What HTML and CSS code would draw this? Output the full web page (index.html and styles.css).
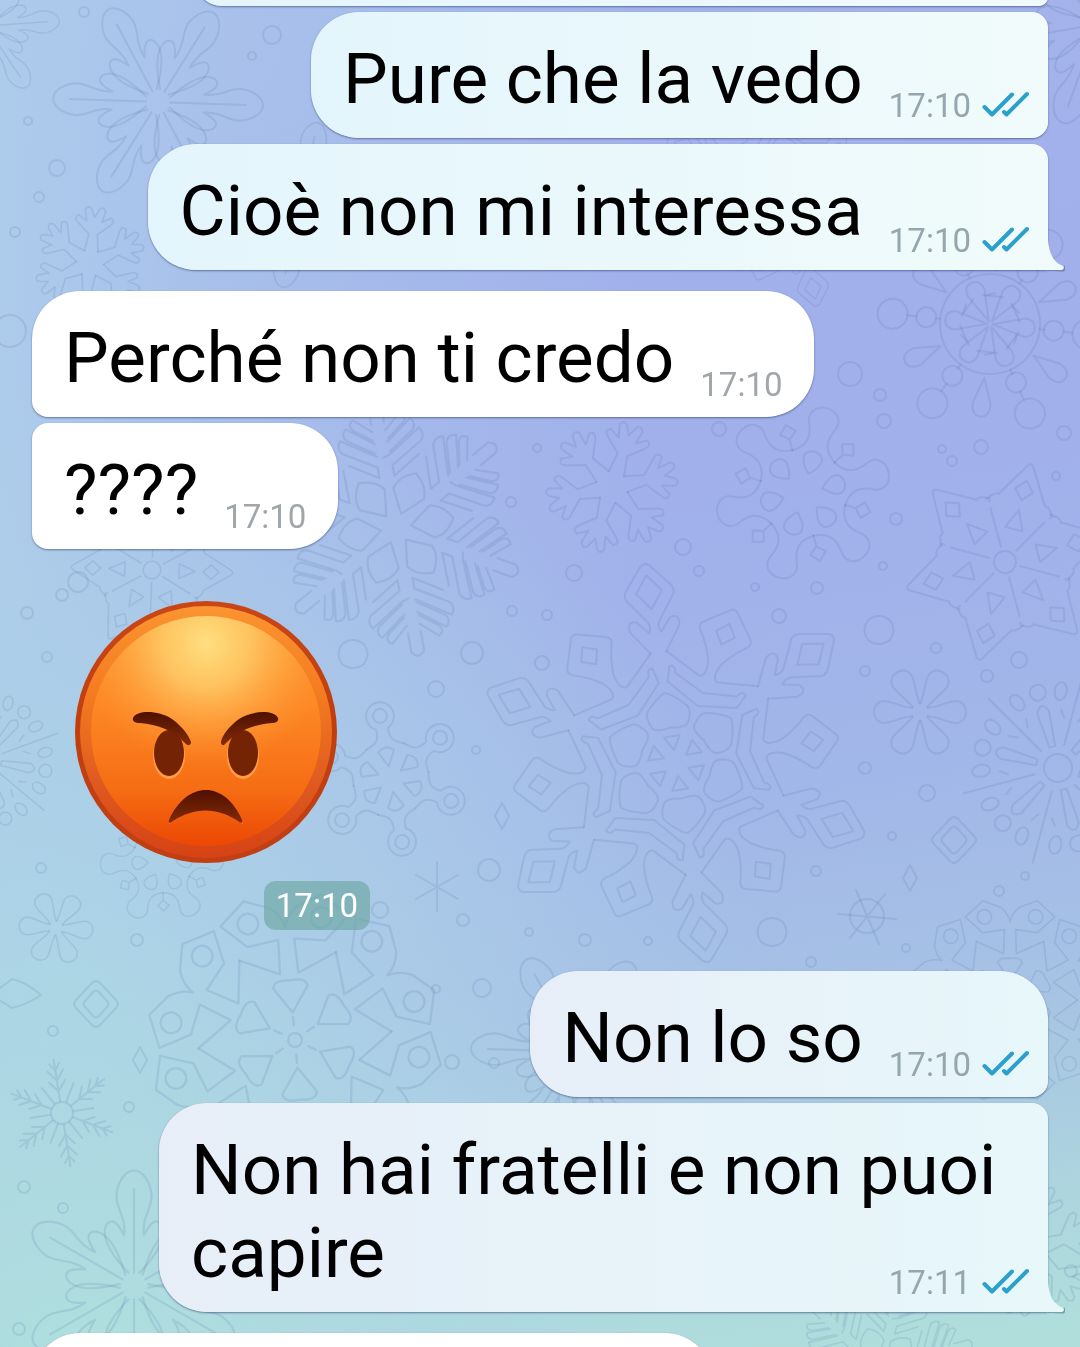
FILE: index.html
```html
<!DOCTYPE html>
<html lang="it">
<head>
<meta charset="utf-8">
<meta name="viewport" content="width=device-width, initial-scale=1">
<title>Chat</title>
<link rel="stylesheet" href="styles.css">
</head>
<body>
<svg class="wallpaper" viewBox="0 0 1080 1347" preserveAspectRatio="xMidYMid slice" aria-hidden="true">
  <defs>
    <!-- Leaf-shaped snowflake -->
    <g id="leaf-arm"><path d="M0-12V-88M5-12C24-32 30-46 25-56C20-62 15-58 9-46M9-46C7-62 16-70 16-82C15-96 7-105 0-105C-7-105-15-96-16-82C-16-70-7-62-9-46M-9-46C-15-58-20-62-25-56C-30-46-24-32-5-12"/></g>
    <g id="leaf"><use href="#leaf-arm"/><use href="#leaf-arm" transform="rotate(60)"/><use href="#leaf-arm" transform="rotate(120)"/><use href="#leaf-arm" transform="rotate(180)"/><use href="#leaf-arm" transform="rotate(240)"/><use href="#leaf-arm" transform="rotate(300)"/></g>

    <!-- Forked snowflake -->
    <g id="fork-arm"><path d="M8-14L5-34L20-47Q25-52 19-55L9-49L12-62Q9-68 5-64L0-54L-5-64Q-9-68-12-62L-9-49L-19-55Q-25-52-20-47L-5-34L-8-14"/></g>
    <g id="fork"><use href="#fork-arm"/><use href="#fork-arm" transform="rotate(60)"/><use href="#fork-arm" transform="rotate(120)"/><use href="#fork-arm" transform="rotate(180)"/><use href="#fork-arm" transform="rotate(240)"/><use href="#fork-arm" transform="rotate(300)"/></g>

    <!-- Large geometric snowflake -->
    <g id="crystal-arm">
      <path d="M8-112L25-136Q27-148 17-145L6-132Q2-140 8-146L24-168Q26-173 22-178L4-200Q0-203-4-200L-22-178Q-26-173-24-168L-8-146Q-2-140-6-132L-17-145Q-27-148-25-136L-8-112"/>
      <path d="M0-190L13-173L0-156L-13-173ZM0-71Q8-68 20-55Q24-49 18-38Q15-33 0-36Q-15-33-18-38Q-24-49-20-55Q-8-68 0-71ZM-8-27L8-27L0-13Z"/>
      <g transform="rotate(30)">
        <path d="M-49-101L-10-90Q-2-92-7-108Q-14-122-25-133Q-29-138-25-142L-4-162Q0-166 4-162L25-142Q29-138 25-133Q14-122 7-108Q2-92 10-90L49-101"/>
        <path d="M0-149L10-138L0-127L-10-138ZM-41-88Q-36-92-33-84L0-75L33-84Q36-92 41-88L37-73L0-61L-37-73Z"/>
      </g>
    </g>
    <g id="crystal"><use href="#crystal-arm"/><use href="#crystal-arm" transform="rotate(60)"/><use href="#crystal-arm" transform="rotate(120)"/><use href="#crystal-arm" transform="rotate(180)"/><use href="#crystal-arm" transform="rotate(240)"/><use href="#crystal-arm" transform="rotate(300)"/></g>

    <!-- Fern snowflake -->
    <g id="fern-arm">
      <path d="M0-68L6-70L37-90Q42-84 37-78L7-60V-50L33-66M6-82L30-100Q36-95 31-89L7-73M6-93L22-107Q29-103 23-97L7-85M6-100V-118Q0-126-6-118V-100M-6-70L-37-90Q-42-84-37-78L-7-60V-50L-33-66M-6-82L-30-100Q-36-95-31-89L-7-73M-6-93L-22-107Q-29-103-23-97L-7-85" transform="translate(0 2)"/>
      <path d="M0-14L15-34Q14-46 0-54Q-14-46-15-34Z" transform="rotate(30)"/>
    </g>
    <g id="fern"><use href="#fern-arm"/><use href="#fern-arm" transform="rotate(60)"/><use href="#fern-arm" transform="rotate(120)"/><use href="#fern-arm" transform="rotate(180)"/><use href="#fern-arm" transform="rotate(240)"/><use href="#fern-arm" transform="rotate(300)"/></g>

    <!-- Wheel with beads and drops -->
    <g id="wheel-arm">
      <path d="M0-3L9-34Q9-45 0-45Q-9-45-9-34ZM0-50V-55M0-74V-83M7-28L17-26"/><circle cy="-64" r="10"/><circle cy="-98" r="15"/>
      <path d="M0-54L9-80Q9-93 0-93Q-9-93-9-80ZM-10-28H10" transform="rotate(30)"/>
    </g>
    <g id="wheel"><circle r="50"/><use href="#wheel-arm"/><use href="#wheel-arm" transform="rotate(60)"/><use href="#wheel-arm" transform="rotate(120)"/><use href="#wheel-arm" transform="rotate(180)"/><use href="#wheel-arm" transform="rotate(240)"/><use href="#wheel-arm" transform="rotate(300)"/></g>

    <!-- Splash snowflake -->
    <g id="splash-arm">
      <path d="M-22-38C-10-46-8-54-12-66C-20-80-10-88 0-88C10-88 20-80 12-66C8-54 10-46 22-38"/>
      <path d="M0-20Q11-30 9-38Q6-43 0-43Q-6-43-9-38Q-11-30 0-20Z"/>
      <path d="M0-44V-55M0-55L8-62L0-70L-8-62Z" transform="rotate(30)"/>
    </g>
    <g id="splash"><use href="#splash-arm"/><use href="#splash-arm" transform="rotate(60)"/><use href="#splash-arm" transform="rotate(120)"/><use href="#splash-arm" transform="rotate(180)"/><use href="#splash-arm" transform="rotate(240)"/><use href="#splash-arm" transform="rotate(300)"/></g>

    <!-- Six-pointed star -->
    <g id="star-arm">
      <path d="M-34-56Q-28-66-24-64L-3-99Q0-103 3-99L24-64Q28-66 34-56L32-54M0-84L9-74L0-64L-9-74ZM0-54L9-34H-9Z"/><path d="M0-16V-56" transform="rotate(30)"/>
    </g>
    <g id="star"><circle r="11"/><use href="#star-arm"/><use href="#star-arm" transform="rotate(60)"/><use href="#star-arm" transform="rotate(120)"/><use href="#star-arm" transform="rotate(180)"/><use href="#star-arm" transform="rotate(240)"/><use href="#star-arm" transform="rotate(300)"/></g>

    <!-- Flower -->
    <g id="petal"><path d="M4-8C6-22 11-28 11-37Q9-46 0-46Q-9-46-11-37C-11-28-6-22-4-8"/></g>
    <g id="flower"><use href="#petal"/><use href="#petal" transform="rotate(60)"/><use href="#petal" transform="rotate(120)"/><use href="#petal" transform="rotate(180)"/><use href="#petal" transform="rotate(240)"/><use href="#petal" transform="rotate(300)"/></g>

    <!-- Firework -->
    <g id="spark-arm">
      <path d="M0-24V-98M-7-50L-12-57M7-50L12-57"/><ellipse cx="-12" cy="-76" rx="6" ry="9" transform="rotate(-4)"/><ellipse cx="12" cy="-76" rx="6" ry="9" transform="rotate(4)"/>
      <g transform="rotate(30)"><path d="M-3-22L-6-58Q0-70 6-58L3-22Z"/><circle cy="-78" r="8"/></g>
    </g>
    <g id="spark"><circle r="14"/><use href="#spark-arm"/><use href="#spark-arm" transform="rotate(60)"/><use href="#spark-arm" transform="rotate(120)"/><use href="#spark-arm" transform="rotate(180)"/><use href="#spark-arm" transform="rotate(240)"/><use href="#spark-arm" transform="rotate(300)"/></g>

    <!-- Ringed snowflake -->
    <g id="ring-arm">
      <path d="M-19-33C-13-36-5-36-6-51A14 14 0 1 1 6-51C5-36 13-36 19-33M0-13L8-28Q0-36-8-28Z"/><circle cy="-64" r="7"/>
    </g>
    <g id="rings"><use href="#ring-arm"/><use href="#ring-arm" transform="rotate(60)"/><use href="#ring-arm" transform="rotate(120)"/><use href="#ring-arm" transform="rotate(180)"/><use href="#ring-arm" transform="rotate(240)"/><use href="#ring-arm" transform="rotate(300)"/></g>

    <!-- Paddle snowflake -->
    <g id="paddle-arm">
      <path d="M-42-73L-8-58L-7-88L-34-84L-56-104L-34-124L-12-116Q-2-108 0-98Q2-108 12-116L34-124L56-104L34-84L7-88L8-58L42-73"/>
      <circle cx="-32" cy="-104" r="9"/><circle cx="32" cy="-104" r="9"/>
      <path d="M0-24L15-46Q14-54 0-52Q-14-54-15-46ZM0-13V-20"/>
    </g>
    <g id="paddles"><circle r="6"/><use href="#paddle-arm"/><use href="#paddle-arm" transform="rotate(60)"/><use href="#paddle-arm" transform="rotate(120)"/><use href="#paddle-arm" transform="rotate(180)"/><use href="#paddle-arm" transform="rotate(240)"/><use href="#paddle-arm" transform="rotate(300)"/></g>

    <!-- Needle snowflake -->
    <g id="needle-arm"><path d="M0-12V-54M0-22L8-32M0-22L-8-32M0-33L8-43M0-33L-8-43M0-43L5-50M0-43L-5-50"/><path d="M0-12V-32" transform="rotate(30)"/></g>
    <g id="needles"><circle r="11"/><use href="#needle-arm"/><use href="#needle-arm" transform="rotate(60)"/><use href="#needle-arm" transform="rotate(120)"/><use href="#needle-arm" transform="rotate(180)"/><use href="#needle-arm" transform="rotate(240)"/><use href="#needle-arm" transform="rotate(300)"/></g>

    <path id="gem" d="M-20-4L-4-21Q0-25 4-21L20-4Q24 0 20 4L4 21Q0 25-4 21L-20 4Q-24 0-20-4ZM-11-3L-3-12Q0-15 3-12L11-3Q14 0 11 3L3 12Q0 15-3 12L-11 3Q-14 0-11-3Z"/>
    <path id="rhomb" d="M0-13L7 0L0 13L-7 0Z"/>
    <path id="pebble" d="M-11-10Q0-18 11-10Q18 0 11 10Q0 18-11 10Q-18 0-11-10Z"/>
  </defs>

  <g class="doodles">
    <use href="#leaf" transform="translate(158 102) rotate(-28)"/>
    <use href="#leaf" transform="translate(-14 26) rotate(26) scale(.7)"/>
    <use href="#leaf" transform="translate(1098 24) rotate(20)"/>
    <use href="#fork" transform="translate(90 263) rotate(6) scale(.85)"/>
    <use href="#fork" transform="translate(612 487) rotate(18)"/>
    <use href="#crystal" transform="translate(676 763) rotate(-9)"/>
    <use href="#fern" transform="translate(396 528) rotate(-10) scale(1.08)"/>
    <use href="#wheel" transform="translate(990 324) rotate(36)"/>
    <use href="#splash" transform="translate(803 493) rotate(16)"/>
    <use href="#star" transform="translate(1005 562) rotate(15)"/>
    <use href="#star" transform="translate(152 570) rotate(32) scale(.8)"/>
    <use href="#flower" transform="translate(920 712) rotate(30)"/>
    <use href="#flower" transform="translate(56 928) rotate(34) scale(.8)"/>
    <use href="#spark" transform="translate(1058 768) rotate(15)"/>
    <use href="#spark" transform="translate(-16 760) rotate(10) scale(.8)"/>
    <use href="#rings" transform="translate(391 779) rotate(-10)"/>
    <use href="#splash" transform="translate(162 862) rotate(28) scale(.7)"/>
    <use href="#paddles" transform="translate(295 1040) rotate(-5) scale(1.15)"/>
    <use href="#needles" transform="translate(62 1113) rotate(-9)"/>
    <use href="#leaf" transform="translate(134 1286) scale(1.1)"/>
    <use href="#paddles" transform="translate(1010 1000) scale(.8)"/>
    <use href="#leaf" transform="translate(576 1052) rotate(-28)"/>
    <use href="#crystal" transform="translate(790 180) rotate(-12) scale(.64)"/>
    <use href="#leaf" transform="translate(300 205) rotate(12) scale(.8)"/>
    <use href="#fork" transform="translate(1030 1250) rotate(12)"/>
    <use href="#fern" transform="translate(880 1370) rotate(14) scale(.8)"/>
    <g transform="translate(867 916)"><circle r="17"/><path d="M-29-2L29 3M-11-26L12 28M18-22L-17 22"/></g>
    <path d="M437 862V911M416 875L458 899M416 899L458 875"/>
    <use href="#gem" transform="translate(954 840)"/>
    <use href="#gem" transform="translate(96 1004)"/>
    <use href="#rhomb" x="910" y="878"/><use href="#rhomb" x="502" y="816"/><use href="#rhomb" x="140" y="1060"/>
    <path d="M-4 991L12 979Q26 982 41 995Q28 1004 12 1008L-4 998"/>
    <use href="#pebble" x="879" y="630"/><use href="#pebble" x="772" y="932"/><use href="#pebble" x="353" y="654"/>
    <circle cx="272" cy="35" r="9"/><circle cx="252" cy="56" r="4"/><circle cx="84" cy="12" r="5"/><circle cx="28" cy="121" r="4"/><circle cx="57" cy="168" r="8"/><circle cx="39" cy="197" r="5"/><circle cx="15" cy="232" r="5"/>
    <circle cx="10" cy="331" r="16"/><circle cx="78" cy="582" r="10"/><circle cx="62" cy="595" r="6"/><circle cx="27" cy="613" r="6"/><circle cx="47" cy="657" r="5"/>
    <circle cx="850" cy="374" r="12"/><circle cx="880" cy="395" r="6"/><circle cx="884" cy="421" r="7"/><circle cx="719" cy="429" r="7"/><circle cx="942" cy="449" r="4"/><circle cx="952" cy="461" r="5"/><circle cx="981" cy="447" r="7"/><circle cx="1064" cy="433" r="7"/><circle cx="1056" cy="476" r="4"/>
    <circle cx="896" cy="519" r="6"/><circle cx="683" cy="547" r="8"/><circle cx="699" cy="571" r="5"/><circle cx="574" cy="573" r="8"/><circle cx="537" cy="448" r="4"/><circle cx="511" cy="502" r="5"/><circle cx="512" cy="611" r="5"/><circle cx="547" cy="615" r="5"/><circle cx="542" cy="663" r="7"/><circle cx="472" cy="653" r="11"/><circle cx="436" cy="689" r="8"/><circle cx="476" cy="750" r="4"/>
    <circle cx="755" cy="587" r="4"/><circle cx="817" cy="588" r="6"/><circle cx="883" cy="566" r="4"/><circle cx="779" cy="616" r="7"/><circle cx="936" cy="648" r="5"/><circle cx="1019" cy="660" r="8"/><circle cx="865" cy="671" r="5"/><circle cx="987" cy="676" r="6"/><circle cx="865" cy="768" r="6"/><circle cx="927" cy="793" r="8"/><circle cx="892" cy="836" r="4"/><circle cx="816" cy="871" r="5"/><circle cx="1025" cy="876" r="4"/><circle cx="999" cy="891" r="5"/><circle cx="906" cy="948" r="4"/><circle cx="811" cy="962" r="5"/>
    <circle cx="489" cy="870" r="11"/><circle cx="463" cy="920" r="6"/><circle cx="380" cy="910" r="8"/><circle cx="529" cy="932" r="4"/><circle cx="585" cy="940" r="6"/><circle cx="648" cy="941" r="4"/><circle cx="137" cy="940" r="6"/><circle cx="41" cy="868" r="5"/><circle cx="53" cy="1031" r="5"/><circle cx="482" cy="988" r="9"/><circle cx="436" cy="989" r="4"/><circle cx="452" cy="1062" r="7"/><circle cx="494" cy="1063" r="5"/><circle cx="129" cy="1107" r="5"/><circle cx="24" cy="1187" r="6"/><circle cx="63" cy="1208" r="5"/><circle cx="19" cy="1329" r="6"/><circle cx="1071" cy="1271" r="6"/>
  </g>
</svg>

<main class="chat">
  <div class="message message--out message--joined message--above"></div>

  <div class="message message--out message--first message--joined">
    <p class="message__text">Pure che la vedo</p>
    <div class="meta"><time>17:10</time><svg class="ticks" viewBox="0 0 48 28" role="img" aria-label="Letto"><path d="M2.500 16L10 23.500L30 3.500M22 21L24.500 23.500L45 3"/></svg></div>
  </div>

  <div class="message message--out message--tail">
    <p class="message__text">Cioè non mi interessa</p>
    <div class="meta"><time>17:10</time><svg class="ticks" viewBox="0 0 48 28" role="img" aria-label="Letto"><path d="M2.500 16L10 23.500L30 3.500M22 21L24.500 23.500L45 3"/></svg></div>
    <svg class="tail" viewBox="0 0 17 32" aria-hidden="true"><path class="tail__shade" d="M0 30L15 30.500Q18 29 16 26"/><path class="tail__fill" d="M0 0C1 13 5 22 15 26Q17 28 14 30H0Z"/></svg>
  </div>

  <div class="message message--in message--first message--joined">
    <p class="message__text">Perché non ti credo</p>
    <div class="meta"><time>17:10</time></div>
  </div>

  <div class="message message--in">
    <p class="message__text">????</p>
    <div class="meta"><time>17:10</time></div>
  </div>

  <div class="sticker">
    <svg class="sticker__face" viewBox="0 0 264 264" role="img" aria-label="Faccina arrabbiata">
      <defs>
        <linearGradient id="rim" x1="0" y1="0" x2="0" y2="1"><stop offset="0" stop-color="#c94716"/><stop offset=".5" stop-color="#c03e0e"/><stop offset="1" stop-color="#c23f14"/></linearGradient>
        <linearGradient id="band" x1="0" y1="0" x2="0" y2="1"><stop offset="0" stop-color="#fb9430"/><stop offset=".35" stop-color="#f47b20"/><stop offset=".7" stop-color="#df5a20"/><stop offset="1" stop-color="#d64214"/></linearGradient>
        <linearGradient id="skin" x1="0" y1="0" x2="0" y2="1"><stop offset="0" stop-color="#fd9c33"/><stop offset=".4" stop-color="#fd8724"/><stop offset=".75" stop-color="#f66d14"/><stop offset="1" stop-color="#ec4804"/></linearGradient>
        <radialGradient id="shine" cx=".5" cy=".12" r=".55"><stop offset="0" stop-color="#ffdf80"/><stop offset=".35" stop-color="#ffcf6c" stop-opacity=".8"/><stop offset="1" stop-color="#ff9a34" stop-opacity="0"/></radialGradient>
        <linearGradient id="brow" x1="0" y1="0" x2="0" y2="1"><stop offset="0" stop-color="#4f1000"/><stop offset="1" stop-color="#832a08"/></linearGradient>
      </defs>
      <circle cx="132" cy="132" r="131" fill="url(#rim)"/>
      <circle cx="132" cy="132" r="126" fill="url(#band)"/>
      <circle cx="132" cy="131" r="115" fill="url(#skin)"/>
      <circle cx="132" cy="131" r="115" fill="url(#shine)"/>
      <g fill="#ff9c48"><ellipse cx="95" cy="156" rx="16" ry="23"/><ellipse cx="169" cy="156" rx="16" ry="23"/><path d="M95 224C111 190 153 190 169 224C146 205 118 205 95 224Z"/></g>
      <g fill="#742405"><ellipse cx="95" cy="153" rx="15" ry="23"/><ellipse cx="169" cy="153" rx="15" ry="23"/></g>
      <path fill="url(#brow)" d="M95 220C113 180 151 180 168 220C169 224 166 223 164 221C143 207 120 207 99 221C96 224 94 223 95 220Z"/>
      <path fill="url(#brow)" d="M59 118C63 110 84 110 98 119C109 127 115 136 117 142C117 146 113 146 111 143C97 129 84 125 66 123C61 123 58 121 59 118Z"/>
      <path fill="url(#brow)" d="M204 118C200 110 179 110 165 119C154 127 148 136 147 142C147 146 150 146 152 143C166 129 180 125 198 123C202 123 205 121 204 118Z"/>
    </svg>
    <time class="sticker__time">17:10</time>
  </div>

  <div class="message message--out message--low message--group-start message--first message--joined">
    <p class="message__text">Non lo so</p>
    <div class="meta"><time>17:10</time><svg class="ticks" viewBox="0 0 48 28" role="img" aria-label="Letto"><path d="M2.500 16L10 23.500L30 3.500M22 21L24.500 23.500L45 3"/></svg></div>
  </div>

  <div class="message message--out message--low message--tail message--wrapped">
    <p class="message__text">Non hai fratelli e non puoi capire</p>
    <div class="meta"><time>17:11</time><svg class="ticks" viewBox="0 0 48 28" role="img" aria-label="Letto"><path d="M2.500 16L10 23.500L30 3.500M22 21L24.500 23.500L45 3"/></svg></div>
    <svg class="tail" viewBox="0 0 17 32" aria-hidden="true"><path class="tail__shade" d="M0 30L15 30.500Q18 29 16 26"/><path class="tail__fill" d="M0 0C1 13 5 22 15 26Q17 28 14 30H0Z"/></svg>
  </div>

  <div class="message message--in message--first message--below"></div>
</main>
</body>
</html>
```
FILE: styles.css
```css
* {
  box-sizing: border-box;
}

body {
  margin: 0;
  font-family: Roboto, "Noto Sans", sans-serif;
  background: #a9c6e4;
}

/* Wallpaper */

.wallpaper {
  position: fixed;
  inset: 0;
  z-index: -1;
  width: 100%;
  height: 100%;
  background:
    radial-gradient(ellipse 60% 32% at 8% 100%, rgba(175, 225, 220, 0.9), transparent),
    radial-gradient(ellipse 65% 45% at 5% 72%, rgba(172, 212, 230, 1), rgba(172, 208, 230, 0.6) 50%, transparent),
    linear-gradient(to right, rgba(173, 203, 235, 1), rgba(170, 198, 235, 0.7) 20%, rgba(168, 192, 234, 0) 60%),
    linear-gradient(172deg, #a5b6ea 0%, #a1afeb 28%, #a1b1ea 44%, #a2b7e9 60%, #a6c2e4 75%, #aed8dd 92%, #b0dfdb 100%);
}

.doodles {
  fill: none;
  stroke: #47659c;
  stroke-opacity: 0.14;
  stroke-width: 2;
  stroke-linecap: round;
  stroke-linejoin: round;
}

/* Conversation */

.chat {
  display: flex;
  flex-direction: column;
  align-items: flex-start;
  height: 100vh;
  padding: 0 32px;
  overflow: hidden;
}

.message {
  position: relative;
  display: grid;
  flex: none;
  grid-template-columns: auto auto;
  column-gap: 26px;
  align-items: end;
  max-width: 90%;
  margin-bottom: 21px;
  padding-left: 32px;
  border-radius: 16px;
  box-shadow: 0 1px 2px rgba(50, 60, 110, 0.6);
}

.message--joined {
  margin-bottom: 6px;
}

.message__text {
  margin: 0;
  padding: 25px 0 18px;
  font-size: 71px;
  line-height: 83px;
  color: #000;
}

.message--in {
  padding-right: 32px;
  border-radius: 16px 48px 48px 16px;
  background: #fff;
}

.message--in.message--first {
  border-top-left-radius: 48px;
}

.message--out {
  align-self: flex-end;
  padding-right: 18px;
  border-radius: 48px 16px 16px 48px;
  background: linear-gradient(to right, #e3f5fc, #f1fbfb);
}

.message--low {
  background: linear-gradient(to right, #e7eef8, #e7f7fa);
}

.message--group-start {
  margin-top: 41px;
  border-top-right-radius: 48px;
}

.message--tail {
  border-bottom-right-radius: 0;
}

.message--wrapped {
  grid-template-columns: 1fr;
  max-width: 889px;
}

.message--wrapped > .message__text,
.message--wrapped > .meta {
  grid-area: 1 / 1;
}

/* Neighbours that only peek in at the edges of the view */

.message--above {
  width: 853px;
  height: 54px;
  margin-top: -48px;
}

.message--below {
  width: 681px;
  height: 126px;
}

.meta {
  display: flex;
  justify-self: end;
  gap: 11px;
  padding-bottom: 12px;
  font-size: 33px;
  line-height: 40px;
  color: #a1a6aa;
}

.message--out .meta {
  color: #94a7ad;
}

.message--tail .meta {
  padding-bottom: 9px;
}

.ticks {
  width: 48px;
  height: 28px;
  margin-top: 5px;
  fill: none;
  stroke: #2ba0cb;
  stroke-width: 4;
  stroke-linecap: round;
  stroke-linejoin: round;
}

.tail {
  position: absolute;
  right: -17px;
  bottom: -2px;
  width: 17px;
  height: 32px;
}

.tail__shade {
  fill: none;
  stroke: rgba(50, 60, 110, 0.4);
  stroke-width: 2;
}

.tail__fill {
  fill: #f1fbfb;
}

.message--low .tail__fill {
  fill: #e7f7fa;
}

/* Large emoji */

.sticker {
  display: flex;
  flex: none;
  flex-direction: column;
  align-items: flex-end;
  gap: 17px;
  width: 338px;
  margin-top: 30px;
}

.sticker__face {
  align-self: flex-start;
  width: 264px;
  height: 264px;
  margin-left: 42px;
}

.sticker__time {
  padding: 5px 12px 4px;
  border-radius: 12px;
  font-size: 33px;
  line-height: 40px;
  color: #fff;
  background: rgba(110, 168, 165, 0.68);
}
```
